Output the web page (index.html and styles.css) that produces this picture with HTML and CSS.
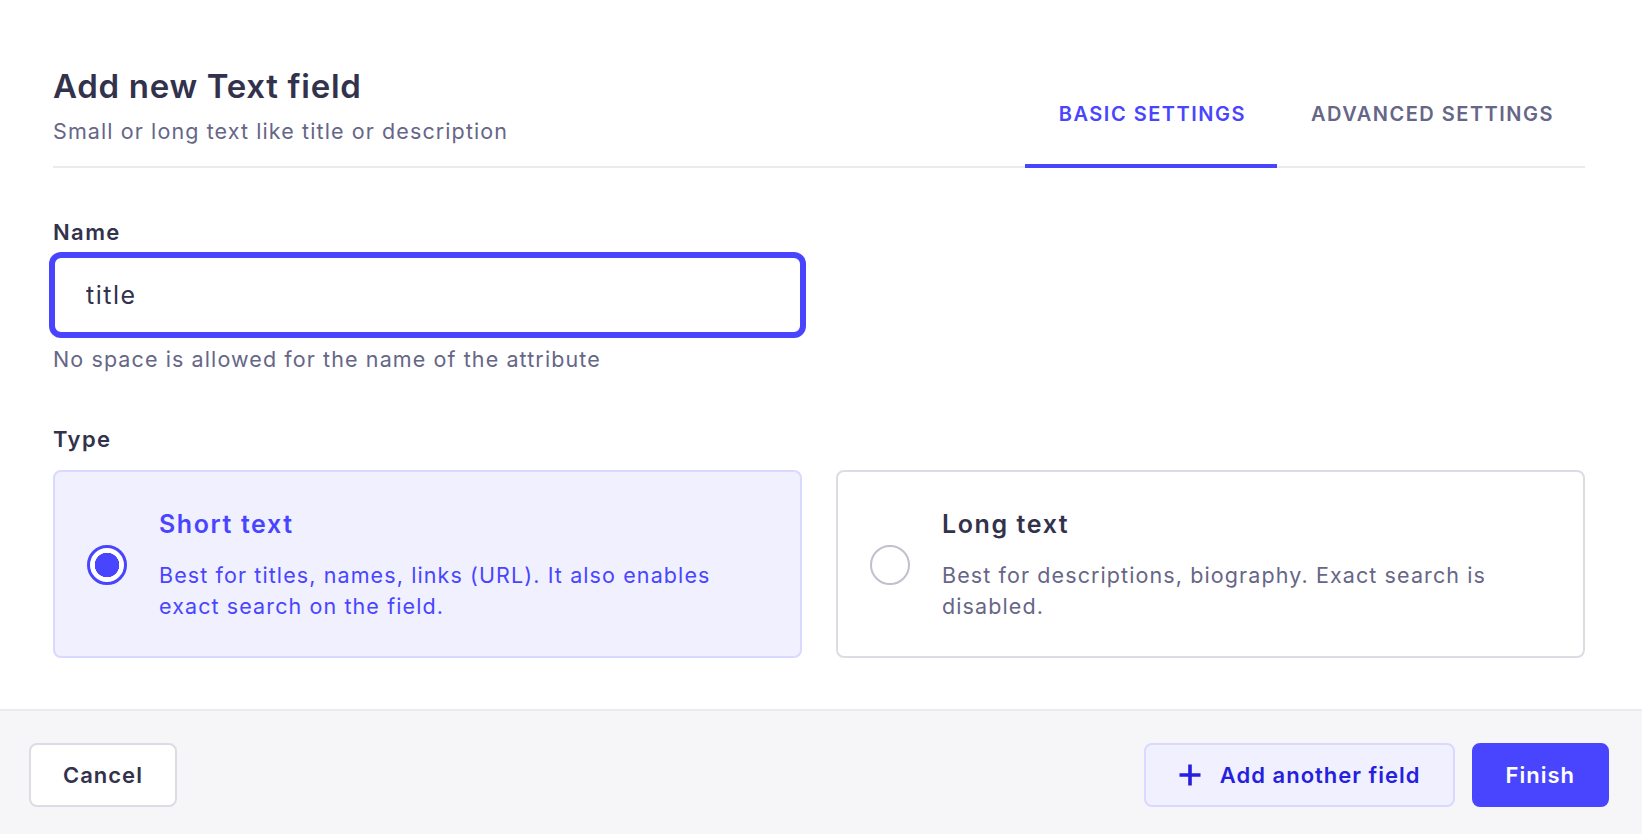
FILE: index.html
```html
<!DOCTYPE html>
<html lang="en">
<head>
    <meta charset="UTF-8">
    <meta name="viewport" content="width=device-width, initial-scale=1.0">
    <title>Add new Text field</title>
    <link rel="stylesheet" href="styles.css">
</head>
<body>
    <div class="modal">
        <div class="modal-body">
            <header class="modal-header">
                <div class="heading">
                    <h1>Add new Text field</h1>
                    <p class="subtitle">Small or long text like title or description</p>
                </div>
                <nav class="tabs">
                    <button class="tab active">Basic settings</button>
                    <button class="tab">Advanced settings</button>
                </nav>
            </header>

            <div class="field">
                <label class="field-label" for="name">Name</label>
                <input class="field-input focused" id="name" type="text" value="title">
                <p class="field-hint">No space is allowed for the name of the attribute</p>
            </div>

            <div class="field">
                <span class="field-label">Type</span>
                <div class="type-grid">
                    <label class="type-card selected">
                        <input type="radio" name="type" value="short" checked>
                        <span class="type-text">
                            <span class="type-title">Short text</span>
                            <span class="type-desc">Best for titles, names, links (URL). It also enables exact search on the field.</span>
                        </span>
                    </label>
                    <label class="type-card">
                        <input type="radio" name="type" value="long">
                        <span class="type-text">
                            <span class="type-title">Long text</span>
                            <span class="type-desc">Best for descriptions, biography. Exact search is disabled.</span>
                        </span>
                    </label>
                </div>
            </div>
        </div>

        <footer class="modal-footer">
            <button class="btn btn-tertiary">Cancel</button>
            <div class="footer-actions">
                <button class="btn btn-secondary">
                    <svg width="24" height="24" viewBox="0 0 24 24" aria-hidden="true">
                        <path d="M12 1.5v21M1.5 12h21" stroke="currentColor" stroke-width="3.6" fill="none"/>
                    </svg>
                    Add another field
                </button>
                <button class="btn btn-primary">Finish</button>
            </div>
        </footer>
    </div>
</body>
</html>
```

FILE: styles.css
```css
html, body {
    height: 100%;
    overflow: hidden;
}
body {
    margin: 0;
    background: #fff;
    font-family: Inter, "Noto Sans", sans-serif;
    color: #32324d;
}
.modal {
    display: flex;
    flex-direction: column;
    height: 100%;
}
.modal-body {
    padding: 0 57px 51px 53px;
}

/* header with title and tabs */
.modal-header {
    display: flex;
    justify-content: space-between;
    align-items: flex-end;
    border-bottom: 2px solid #eaeaef;
    padding-top: 66px;
}
.heading {
    padding-bottom: 20px;
}
h1 {
    margin: 0;
    font-size: 33px;
    line-height: 40px;
    font-weight: 600;
    letter-spacing: 0.7px;
    color: #32324d;
}
.subtitle {
    margin: 10px 0 0;
    font-size: 21.5px;
    line-height: 30px;
    letter-spacing: 1.1px;
    color: #666687;
}
.tabs {
    display: flex;
    margin-bottom: -2px;
}
.tab {
    background: none;
    border: none;
    border-bottom: 4px solid transparent;
    padding: 0 31px 36px 34px;
    font-family: inherit;
    font-size: 20px;
    line-height: 28px;
    font-weight: 600;
    letter-spacing: 1.5px;
    text-transform: uppercase;
    color: #666687;
    cursor: pointer;
}
.tab.active {
    color: #4945ff;
    border-bottom-color: #4945ff;
}

/* form fields */
.field-label {
    display: block;
    font-size: 22px;
    line-height: 30px;
    font-weight: 600;
    letter-spacing: 1.4px;
    color: #32324d;
}
.field:first-of-type {
    padding-top: 49px;
}
.field + .field {
    margin-top: 50px;
}
.field-input {
    display: block;
    box-sizing: border-box;
    width: 749px;
    height: 78px;
    margin-top: 9px;
    padding: 0 31px;
    border: 2px solid #dcdce4;
    border-radius: 8px;
    font-family: inherit;
    font-size: 25px;
    letter-spacing: 1.5px;
    color: #32324d;
    outline: none;
}
.field-input.focused {
    border-color: #4945ff;
    box-shadow: 0 0 0 4px #4945ff;
}
.field-hint {
    margin: 10px 0 0;
    font-size: 21.5px;
    line-height: 30px;
    letter-spacing: 1.1px;
    color: #666687;
}

/* type picker cards */
.type-grid {
    display: grid;
    grid-template-columns: 1fr 1fr;
    gap: 34px;
    margin-top: 16px;
}
.type-card {
    display: flex;
    align-items: center;
    gap: 32px;
    height: 188px;
    box-sizing: border-box;
    padding: 2px 40px 0 32px;
    border: 2px solid #dcdce4;
    border-radius: 8px;
    background: #fff;
    cursor: pointer;
}
.type-card input {
    appearance: none;
    flex: none;
    width: 40px;
    height: 40px;
    margin: 0;
    border: 2px solid #c0c0cf;
    border-radius: 50%;
    background: #fff;
}
.type-card input:checked {
    border: 3px solid #4945ff;
    background: radial-gradient(circle, #4945ff 0 12px, #fff 12.5px);
}
.type-text {
    display: flex;
    flex-direction: column;
    gap: 20px;
}
.type-title {
    font-size: 25px;
    line-height: 32px;
    font-weight: 600;
    letter-spacing: 1.6px;
    color: #32324d;
}
.type-desc {
    font-size: 21.5px;
    line-height: 31px;
    letter-spacing: 1.1px;
    color: #666687;
}
.type-card.selected {
    background: #f0f0ff;
    border-color: #d9d8ff;
}
.type-card.selected .type-title,
.type-card.selected .type-desc {
    color: #4945ff;
}

/* footer */
.modal-footer {
    flex: 1;
    display: flex;
    justify-content: space-between;
    align-items: flex-start;
    padding: 32px 33px 0 29px;
    background: #f6f6f9;
    border-top: 2px solid #eaeaef;
}
.footer-actions {
    display: flex;
    gap: 17px;
}
.btn {
    display: flex;
    align-items: center;
    gap: 18px;
    height: 64px;
    box-sizing: border-box;
    padding: 0 32px;
    border: 2px solid transparent;
    border-radius: 8px;
    font-family: inherit;
    font-size: 22px;
    font-weight: 600;
    letter-spacing: 1px;
    cursor: pointer;
}
.btn-tertiary {
    background: #fff;
    border-color: #dcdce4;
    color: #32324d;
}
.btn-secondary {
    background: #f0f0ff;
    border-color: #d9d8ff;
    color: #271fe0;
}
.btn-primary {
    background: #4945ff;
    border-color: #4945ff;
    color: #fff;
}
```
